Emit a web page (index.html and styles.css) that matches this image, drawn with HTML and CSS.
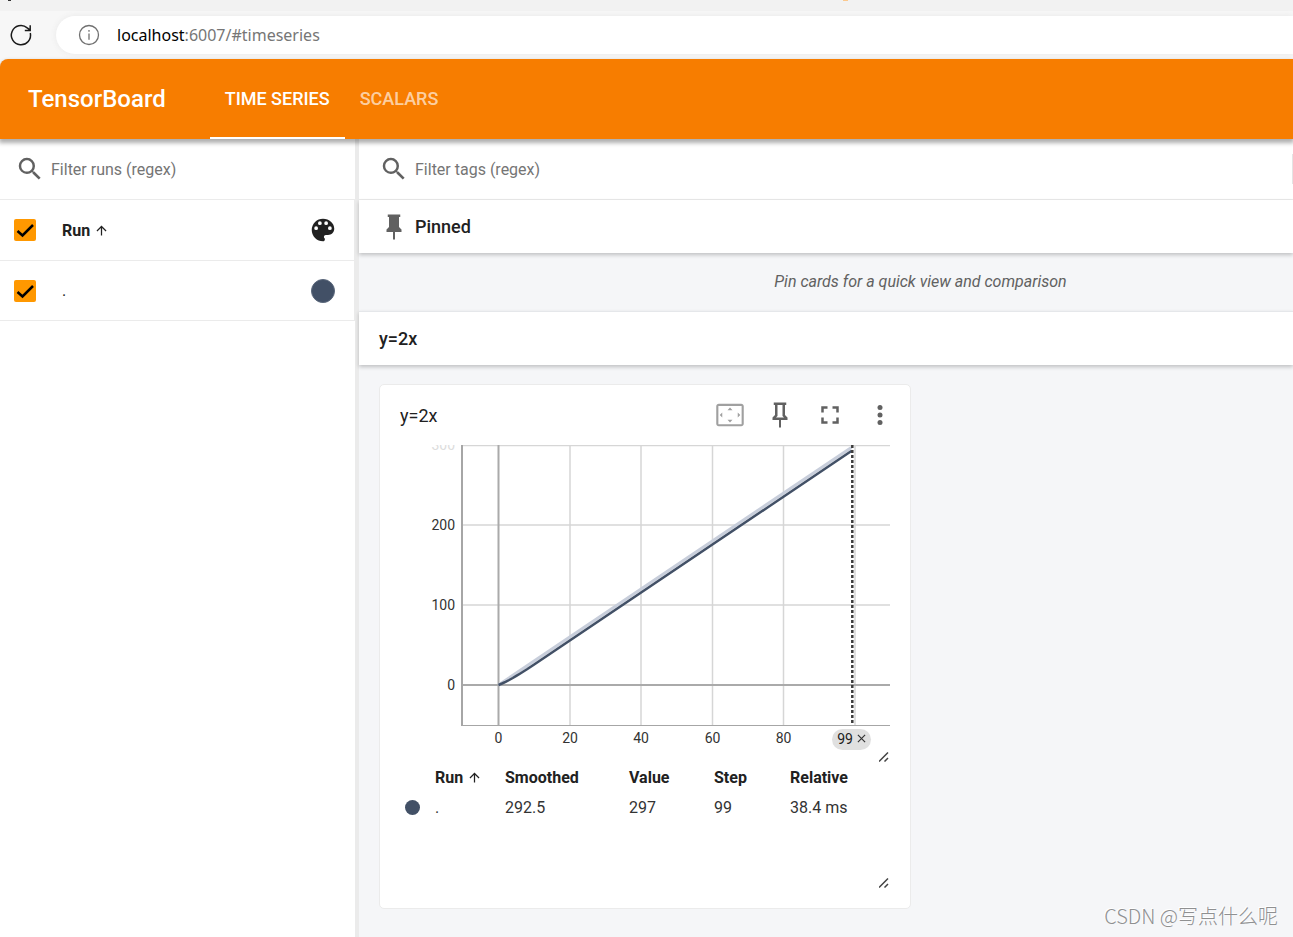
FILE: index.html
```html
<!DOCTYPE html>
<html lang="en">
<head>
<meta charset="utf-8">
<title>TensorBoard</title>
<link rel="stylesheet" href="styles.css">
</head>
<body>
<div class="tab-strip"><span class="tab-mark"></span><span class="tab-mark tab-mark-orange"></span></div>
<div class="toolbar">
  <button class="reload" aria-label="Reload">
    <svg width="24" height="24" viewBox="0 0 24 24" fill="none" stroke="#1a1a1a" stroke-width="1.5"><path d="M21.3 10A9.6 9.6 0 1 1 18.2 4.9L21.2 7.2M21.2 2.2V7.6H15.8"/></svg>
  </button>
  <div class="address">
    <svg width="22" height="22" viewBox="0 0 22 22" fill="none" stroke="#707070" stroke-width="1.3"><circle cx="11" cy="11" r="9.5"/><path d="M11 9.5v6.2M11 6v1.8"/></svg>
    <span class="url"><b>localhost</b>:6007/#timeseries</span>
  </div>
</div>
<header class="app-bar">
  <h1>TensorBoard</h1>
  <nav class="tabs">
    <a href="#timeseries" class="tab active">TIME SERIES</a>
    <a href="#scalars" class="tab">SCALARS</a>
  </nav>
</header>
<div class="body">
  <aside class="sidebar">
    <label class="filter">
      <svg class="icon" viewBox="0 0 24 24"><path d="M15.5 14h-.79l-.28-.27A6.47 6.47 0 0 0 16 9.5 6.5 6.5 0 1 0 9.5 16c1.61 0 3.09-.59 4.23-1.57l.27.28v.79l5 4.99L20.49 19l-4.99-5zm-6 0C7.01 14 5 11.99 5 9.5S7.01 5 9.5 5 14 7.01 14 9.5 11.99 14 9.5 14z"/></svg>
      <input type="text" placeholder="Filter runs (regex)" aria-label="Filter runs (regex)">
    </label>
    <div class="run-row">
      <label class="check"><input type="checkbox" checked aria-label="Select all runs"><svg viewBox="0 0 22 22"><path d="M3.500 12l5 4.500L19 6"/></svg></label>
      <span class="run-head">Run<svg class="arrow" viewBox="0 0 24 24"><path d="M4 12l1.41 1.41L11 7.83V20h2V7.83l5.58 5.59L20 12l-8-8-8 8z"/></svg></span>
      <button class="icon-button palette" aria-label="Color runs">
        <svg class="icon" viewBox="0 0 24 24"><path d="M12 3a9 9 0 0 0 0 18c.83 0 1.5-.67 1.5-1.5 0-.39-.15-.74-.39-1.01-.23-.26-.38-.61-.38-.99 0-.83.67-1.5 1.5-1.5H16c2.76 0 5-2.24 5-5 0-4.42-4.03-8-9-8zm-5.5 9a1.5 1.5 0 1 1 0-3 1.5 1.5 0 0 1 0 3zm3-4a1.5 1.5 0 1 1 0-3 1.5 1.5 0 0 1 0 3zm5 0a1.5 1.5 0 1 1 0-3 1.5 1.5 0 0 1 0 3zm3 4a1.5 1.5 0 1 1 0-3 1.5 1.5 0 0 1 0 3z"/></svg>
      </button>
    </div>
    <div class="run-row">
      <label class="check"><input type="checkbox" checked aria-label="Select run"><svg viewBox="0 0 22 22"><path d="M3.500 12l5 4.500L19 6"/></svg></label>
      <span class="run-name">.</span>
      <button class="swatch" aria-label="Run color"></button>
    </div>
  </aside>
  <main class="main">
    <label class="filter filter-tags">
      <svg class="icon" viewBox="0 0 24 24"><path d="M15.5 14h-.79l-.28-.27A6.47 6.47 0 0 0 16 9.5 6.5 6.5 0 1 0 9.5 16c1.61 0 3.09-.59 4.23-1.57l.27.28v.79l5 4.99L20.49 19l-4.99-5zm-6 0C7.01 14 5 11.99 5 9.5S7.01 5 9.5 5 14 7.01 14 9.5 11.99 14 9.5 14z"/></svg>
      <input type="text" placeholder="Filter tags (regex)" aria-label="Filter tags (regex)">
      <span class="filter-edge"></span>
    </label>
    <section>
      <h2 class="group-head pinned-head">
        <svg class="icon" viewBox="0 0 24 24"><path d="M16 12V4h1V2H7v2h1v8l-2 2v2h5.2v6h1.6v-6H18v-2l-2-2z"/></svg>
        Pinned
      </h2>
      <p class="empty">Pin cards for a quick view and comparison</p>
    </section>
    <section>
      <h2 class="group-head tag-head">y=2x</h2>
      <div class="cards">
        <article class="card">
          <div class="card-head">
            <h3>y=2x</h3>
            <div class="actions">
              <button class="icon-button dim" aria-label="Fit line chart domains to data"><svg class="icon" viewBox="0 0 24 24"><path d="M12 6l-2 2.200h4zM18.200 10v4l2-2zM5.800 10l-2 2 2 2zM14 15.800h-4l2 2.200zM21 3H3c-1.100 0-2 .9-2 2v14c0 1.100.9 2 2 2h18c1.100 0 2-.9 2-2V5c0-1.100-.9-2-2-2zm.3 16.300H2.700V4.700h18.600z"/></svg></button>
              <button class="icon-button" aria-label="Pin card"><svg class="icon" viewBox="0 0 24 24"><path d="M16 12V4h1V2H7v2h1v8l-2 2v2h5.200v6h1.600v-6H18v-2l-2-2zm-7.200 2L10 12.800V4h4v8.800l1.200 1.200H8.800z"/></svg></button>
              <button class="icon-button" aria-label="Toggle full size"><svg class="icon" viewBox="0 0 24 24"><path d="M7 14H5v5h5v-2H7v-3zm-2-4h2V7h3V5H5v5zm12 7h-3v2h5v-5h-2v3zM14 5v2h3v3h2V5h-5z"/></svg></button>
              <button class="icon-button" aria-label="More line chart options"><svg class="icon" viewBox="0 0 24 24"><circle cx="12" cy="6" r="2"/><circle cx="12" cy="12" r="2"/><circle cx="12" cy="18" r="2"/></svg></button>
            </div>
          </div>
          <div class="chart">
            <svg class="plot" viewBox="0 0 490 310" role="img" aria-label="Line chart of y=2x">
              <g stroke="#d6d6d6" stroke-width="1.500">
                <path d="M62 .5H490M62 80H490M62 160H490M170 0V280M241 0V280M312.500 0V280M383.500 0V280M455 0V280"/>
              </g>
              <path d="M98.500 0V280M62 240H490" stroke="#aaa" stroke-width="2"/>
              <path d="M62 0V280" stroke="#a6a6a6" stroke-width="2"/>
              <path d="M61 280.500H490" stroke="#a6a6a6"/>
              <path d="M98.500 240L451.400 2.400" stroke="#c8cedb" stroke-width="3"/>
              <path d="M98.500 240L102 238.500 105.600 236.800 109.200 235 112.800 233 116.300 230.900 119.900 228.700 127 224.300 134.200 219.500 451.400 6" fill="none" stroke="#425066" stroke-width="2.500"/>
              <path d="M452.300 0V280" stroke="#3c3c3c" stroke-width="2.500" stroke-dasharray="3 2"/>
              <g class="ticks" text-anchor="end">
                <text class="faded" x="55" y="5">300</text>
                <text x="55" y="85">200</text>
                <text x="55" y="165">100</text>
                <text x="55" y="245">0</text>
              </g>
              <g class="ticks" text-anchor="middle">
                <text x="98.500" y="298">0</text>
                <text x="170" y="298">20</text>
                <text x="241" y="298">40</text>
                <text x="312.500" y="298">60</text>
                <text x="383.500" y="298">80</text>
              </g>
            </svg>
            <div class="step-chip">99<button aria-label="Remove step"><svg viewBox="0 0 10 10"><path d="M1 1l8 8M9 1L1 9"/></svg></button></div>
            <svg class="grip" viewBox="0 0 10 10"><path d="M0 9.500L9 .5M5.500 9.500L9 6"/></svg>
          </div>
          <div class="data">
            <table>
              <colgroup><col class="c-dot"><col class="c-run"><col class="c-smooth"><col class="c-value"><col class="c-step"><col></colgroup>
              <thead><tr><th></th><th>Run<svg class="arrow" viewBox="0 0 24 24"><path d="M4 12l1.410 1.410L11 7.830V20h2V7.830l5.580 5.590L20 12l-8-8-8 8z"/></svg></th><th>Smoothed</th><th>Value</th><th>Step</th><th>Relative</th></tr></thead>
              <tbody><tr><td><span class="dot"></span></td><td>.</td><td>292.5</td><td>297</td><td>99</td><td>38.4 ms</td></tr></tbody>
            </table>
            <svg class="grip" viewBox="0 0 10 10"><path d="M0 9.500L9 .5M5.500 9.500L9 6"/></svg>
          </div>
        </article>
      </div>
    </section>
  </main>
</div>
<div class="watermark">CSDN @写点什么呢</div>
</body>
</html>
```
FILE: styles.css
```css
* { box-sizing: border-box; }
body {
  margin: 0;
  min-height: 100vh;
  display: flex;
  flex-direction: column;
  position: relative;
  font-family: Roboto, sans-serif;
  font-size: 16px;
  color: #212121;
  background: #f7f7f7;
  overflow-x: hidden;
}
h1, h2, h3, p { margin: 0; }
button { border: 0; padding: 0; background: none; font: inherit; color: inherit; }

.tab-strip { height: 11px; background: #f2f2f2; display: flex; padding-left: 8px; gap: 832px; }
.tab-mark { width: 3px; height: 1px; background: #333; }
.tab-mark-orange { width: 5px; background: #fbc98f; }
.toolbar { height: 48px; display: flex; align-items: center; padding-left: 9px; gap: 23px; }
.reload { width: 24px; height: 24px; }
.reload svg, .address svg { display: block; }
.address {
  flex: 1;
  height: 38px;
  display: flex;
  align-items: center;
  gap: 17px;
  padding-left: 22px;
  background: #fff;
  border-radius: 19px 0 0 19px;
  box-shadow: 0 0 6px #e8e8e8;
}
.url { font: 16px/22px "Noto Sans", sans-serif; color: #767676; }
.url b { font-weight: 400; color: #000; }

.app-bar {
  height: 80px;
  display: flex;
  align-items: center;
  padding-left: 28px;
  gap: 44px;
  background: #f77d00;
  color: #fff;
  border-top-left-radius: 8px;
  box-shadow: 0 3px 4px 1px rgba(0, 0, 0, .32);
  position: relative;
  z-index: 2;
}
h1 { font-size: 24px; font-weight: 500; }
.tabs { display: flex; align-self: stretch; }
.tab {
  display: flex;
  align-items: center;
  padding: 0 15px;
  font-size: 18px;
  font-weight: 500;
  color: rgba(255, 255, 255, .65);
  text-decoration: none;
  border-bottom: 2px solid transparent;
}
.tab.active { color: #fff; border-bottom-color: #fff; }

.body { flex: 1; display: flex; background: #fff; }
.sidebar { width: 359px; flex: none; border-right: 4px solid #ebebeb; }
.icon { width: 30px; height: 30px; display: block; fill: #616161; }
.filter {
  height: 61px;
  display: flex;
  align-items: center;
  padding-left: 15px;
  gap: 6px;
  background: #fff;
  border-bottom: 1px solid #ebebeb;
}
.filter input {
  flex: 1;
  min-width: 0;
  padding: 0;
  border: 0;
  outline: 0;
  background: none;
  font: 16px Roboto, sans-serif;
}
.filter input::placeholder { color: #757575; }
.filter-tags { padding-left: 20px; }
.filter-edge { width: 1px; height: 30px; background: #e4e4e4; }
.run-row {
  height: 61px;
  display: flex;
  align-items: center;
  padding: 0 16px 0 14px;
  border-bottom: 1px solid #ebebeb;
  border-right: 1px solid #ebebeb;
}
.run-row + .run-row { height: 60px; }
.check { display: grid; margin-right: 26px; }
.check input, .check svg { grid-area: 1 / 1; width: 22px; height: 22px; margin: 0; }
.check input { appearance: none; background: #ff9800; border-radius: 2px; }
.check svg { fill: none; stroke: #000; stroke-width: 2.5; pointer-events: none; }
.run-head { flex: 1; font-weight: 700; }
.run-name { flex: 1; }
.arrow { width: 15px; height: 15px; margin-left: 4px; vertical-align: -2px; fill: #212121; }
.palette .icon { fill: #212121; }
.swatch { width: 24px; height: 24px; margin-right: 3px; border-radius: 50%; background: #425066; border: 1px solid #5a677b; }

.main { flex: 1; min-width: 0; background: #f5f6f8; }
.group-head {
  height: 53px;
  display: flex;
  align-items: center;
  gap: 6px;
  padding: 0 20px;
  background: #fff;
  font-size: 18px;
  font-weight: 500;
  box-shadow: 0 2px 4px rgba(0, 0, 0, .22);
  position: relative;
}
.tag-head { border-top: 1px solid #e5e7ea; height: 54px; }
.empty { height: 58px; padding: 19px 0 0 189px; text-align: center; font-style: italic; line-height: 20px; color: #616161; }
.cards { padding: 19px 20px 28px; }
.card {
  max-width: 532px;
  padding: 0 20px 20px;
  background: #fff;
  border: 1px solid #ebebeb;
  border-radius: 5px;
}
.card-head { height: 60px; display: flex; align-items: center; justify-content: space-between; margin-right: -5px; }
h3 { font-size: 18px; font-weight: 400; }
.actions { display: flex; gap: 20px; }
.dim .icon { fill: #a0a0a0; }
.chart { position: relative; padding-bottom: 7px; }
.plot { display: block; width: 100%; fill: none; }
.ticks { font-size: 14px; fill: #333; }
.faded { fill: #ddd; }
.step-chip {
  position: absolute;
  top: 284px;
  right: 19px;
  height: 21px;
  display: flex;
  align-items: center;
  gap: 4px;
  padding: 0 5px 2px;
  border-radius: 11px;
  background: #e0e0e0;
  font-size: 14px;
}
.step-chip svg { display: block; width: 9px; height: 9px; stroke: #333; stroke-width: 1.3; }
.grip { position: absolute; right: 1px; bottom: 0; width: 10px; height: 10px; fill: none; stroke: #444; stroke-width: 1.5; }
.data { height: 126px; position: relative; }
table { width: 100%; table-layout: fixed; border-collapse: collapse; }
th, td { height: 30px; padding: 0; text-align: left; }
th { font-weight: 700; white-space: nowrap; }
td { color: #333; }
.c-dot { width: 35px; }
.c-run { width: 70px; }
.c-smooth { width: 124px; }
.c-value { width: 85px; }
.c-step { width: 76px; }
.dot { display: block; width: 15px; height: 15px; margin-left: 5px; border-radius: 50%; background: #425066; }

.watermark {
  position: absolute;
  right: 15px;
  bottom: 6px;
  font: 20px/30px "Noto Sans CJK SC", sans-serif;
  font-weight: 300;
  color: #8f9091;
  text-shadow: -1px -1px 0 #fff;
}
```
